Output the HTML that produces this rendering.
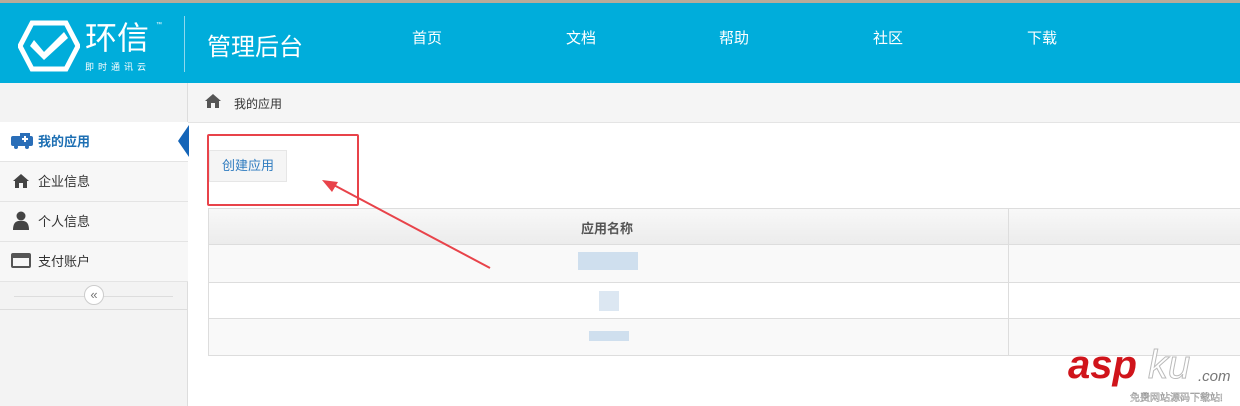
<!DOCTYPE html>
<html><head><meta charset="utf-8"><style>
*{margin:0;padding:0;box-sizing:border-box}
body{width:1240px;height:406px;overflow:hidden;background:#fff;font-family:"Liberation Sans","Noto Sans CJK SC",sans-serif;position:relative}
.a{position:absolute}
.nav{color:#fff;font-size:15px;top:27px}
.side{left:0;width:188px;height:40px;border-bottom:1px solid #e4e4e4;background:#f7f7f7;font-size:13px;color:#333;line-height:39px;padding-left:38px}
</style></head><body>
<div class="a" style="left:0;top:0;width:1240px;height:3px;background:#b8ab9a"></div>
<div class="a" style="left:0;top:3px;width:1240px;height:80px;background:#00addb"></div>
<svg class="a" style="left:18px;top:20px" width="62" height="52" viewBox="0 0 62 52"><polygon points="14,3 48,3 60,26 48,49 14,49 2,26" fill="none" stroke="#fff" stroke-width="5"/><path d="M16,20 L26,32 L46,12 L50,18 L26,40 L12,26 Z" fill="#fff"/></svg>
<div class="a" style="left:85px;top:20px;color:#fff;font-size:32px;line-height:36px">环信</div>
<div class="a" style="left:156px;top:22px;color:#fff;font-size:6px">™</div>
<div class="a" style="left:85px;top:60px;color:#fff;font-size:9px;letter-spacing:4px">即时通讯云</div>
<div class="a" style="left:184px;top:16px;width:1px;height:56px;background:#8fd8ee"></div>
<div class="a" style="left:207px;top:27px;color:#fff;font-size:24px">管理后台</div>
<div class="a nav" style="left:412px">首页</div>
<div class="a nav" style="left:566px">文档</div>
<div class="a nav" style="left:719px">帮助</div>
<div class="a nav" style="left:873px">社区</div>
<div class="a nav" style="left:1027px">下载</div>
<div class="a" style="left:0;top:83px;width:188px;height:323px;background:#f3f3f3;border-right:1px solid #ddd"></div>
<div class="a" style="left:188px;top:83px;width:1052px;height:40px;background:#f5f5f5;border-bottom:1px solid #e4e4e4"></div>
<svg class="a" style="left:204px;top:93px" width="18" height="16" viewBox="0 0 18 16"><path d="M9,1 L1,8 L3,8 L3,15 L7,15 L7,10 L11,10 L11,15 L15,15 L15,8 L17,8 Z" fill="#555"/></svg>
<div class="a" style="left:234px;top:95px;font-size:12px;color:#333">我的应用</div>
<div class="a side" style="top:122px;background:#fff;color:#1d6fb3;font-weight:bold">我的应用</div>
<svg class="a" style="left:11px;top:133px" width="22" height="16" viewBox="0 0 22 16"><rect x="0" y="3" width="22" height="10" rx="2" fill="#2a6eb8"/><rect x="9" y="0" width="10" height="12" fill="#2a6eb8"/><path d="M13,3 h2 v2 h2 v2 h-2 v2 h-2 v-2 h-2 v-2 h2z" fill="#fff"/><circle cx="5" cy="14" r="2" fill="#2a6eb8"/><circle cx="16" cy="14" r="2" fill="#2a6eb8"/></svg>
<div class="a" style="left:178px;top:125px;width:0;height:0;border-top:16px solid transparent;border-bottom:16px solid transparent;border-right:11px solid #1565b8"></div>
<div class="a side" style="top:162px">企业信息</div>
<svg class="a" style="left:12px;top:173px" width="18" height="16" viewBox="0 0 18 16"><path d="M9,1 L1,8 L3,8 L3,15 L7,15 L7,10 L11,10 L11,15 L15,15 L15,8 L17,8 Z" fill="#444"/></svg>
<div class="a side" style="top:202px">个人信息</div>
<svg class="a" style="left:13px;top:211px" width="16" height="19" viewBox="0 0 16 19"><circle cx="8" cy="5" r="4.5" fill="#444"/><path d="M0,19 Q0,9 8,10 Q16,9 16,19 Z" fill="#444"/></svg>
<div class="a side" style="top:242px">支付账户</div>
<div class="a" style="left:11px;top:253px;width:20px;height:15px;border:2px solid #555;border-top-width:5px;border-radius:2px"></div>
<div class="a" style="left:14px;top:296px;width:159px;height:1px;background:#ddd"></div>
<div class="a" style="left:84px;top:285px;width:20px;height:20px;border-radius:50%;background:#fff;border:1px solid #ccc;font-size:13px;text-align:center;line-height:18px;color:#777">«</div>
<div class="a" style="left:0;top:309px;width:188px;height:1px;background:#ddd"></div>
<div class="a" style="left:209px;top:150px;width:78px;height:32px;background:#f5f5f5;border:1px solid #e6e6e6;color:#2f7cc0;font-size:13px;line-height:30px;text-align:center">创建应用</div>
<div class="a" style="left:208px;top:208px;width:1040px;height:148px;border:1px solid #ddd;background:#f9f9f9"></div>
<div class="a" style="left:209px;top:209px;width:1031px;height:36px;background:linear-gradient(#f8f8f8,#ececec);border-bottom:1px solid #ddd"></div>
<div class="a" style="left:581px;top:218px;font-size:13px;font-weight:bold;color:#555">应用名称</div>
<div class="a" style="left:209px;top:282px;width:1031px;height:37px;background:#fff;border-top:1px solid #ddd;border-bottom:1px solid #ddd"></div>
<div class="a" style="left:1008px;top:209px;width:1px;height:146px;background:#ddd"></div>
<div class="a" style="left:578px;top:252px;width:60px;height:18px;background:#cfdfee"></div>
<div class="a" style="left:599px;top:291px;width:20px;height:20px;background:#dce7f2"></div>
<div class="a" style="left:589px;top:331px;width:40px;height:10px;background:#cfdfee"></div>
<div class="a" style="left:207px;top:134px;width:152px;height:72px;border:2px solid #e8434a;border-radius:2px"></div>
<svg class="a" style="left:0;top:0" width="1240" height="406"><line x1="490" y1="268" x2="330" y2="183" stroke="#e8434a" stroke-width="2"/><polygon points="322,180 338,182 332,192" fill="#e8434a"/></svg>
<div class="a" style="left:1068px;top:345px;font-size:40px;font-weight:bold;font-style:italic;color:#d0141b;line-height:40px">asp</div>
<div class="a" style="left:1148px;top:345px;font-size:40px;font-style:italic;color:#fff;-webkit-text-stroke:1px #bbb;line-height:40px">ku</div>
<div class="a" style="left:1198px;top:368px;font-size:15px;font-style:italic;color:#777">.com</div>
<div class="a" style="left:1130px;top:389px;font-size:10px;color:#fff;-webkit-text-stroke:0.4px #888">免费网站源码下载站!</div>
</body></html>
